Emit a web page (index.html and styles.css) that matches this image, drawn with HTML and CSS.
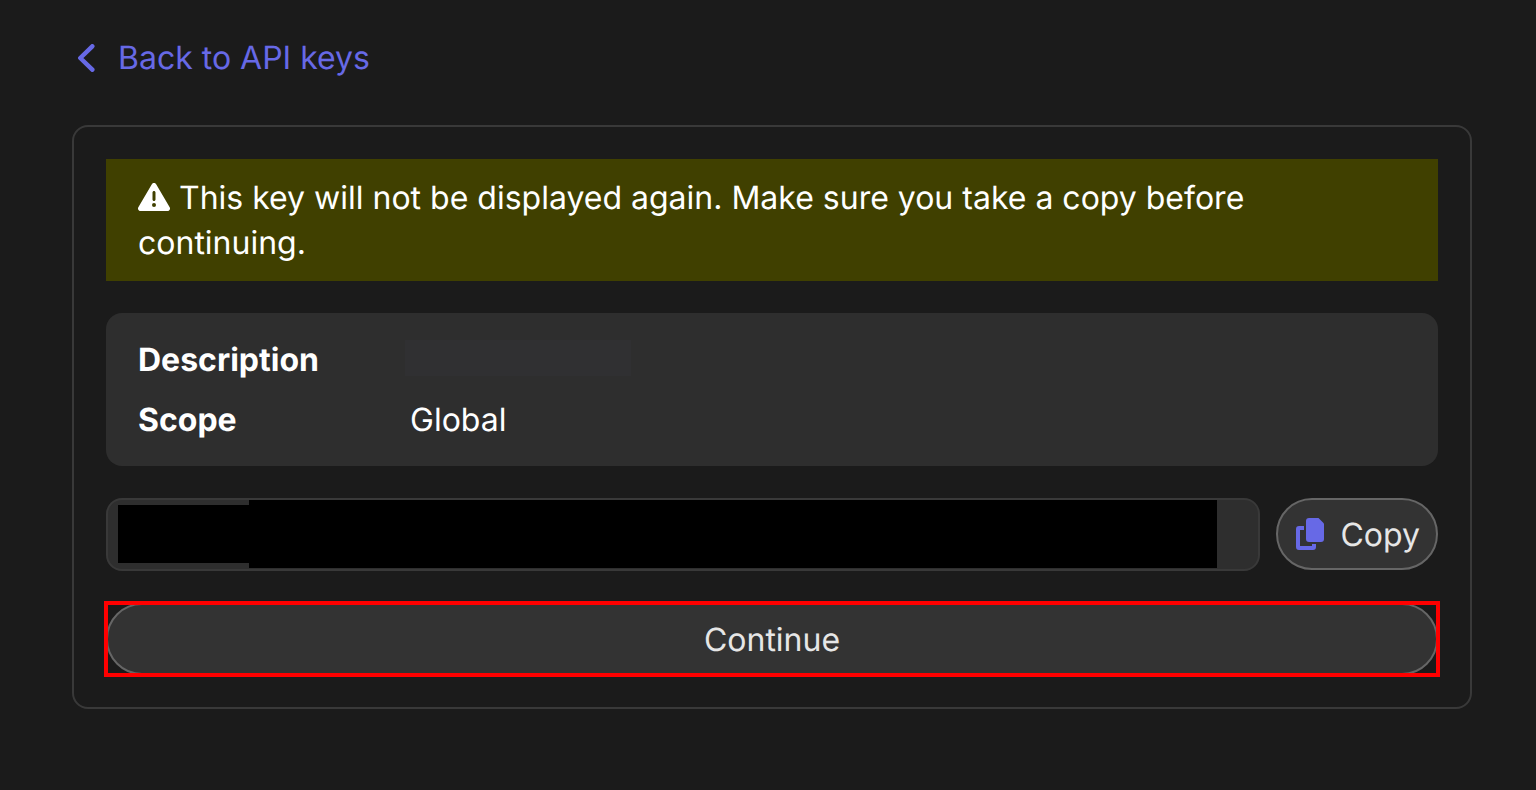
FILE: index.html
```
<!DOCTYPE html>
<html lang="en">
  <head>
    <meta charset="utf-8">
    <title>API key</title>
    <link rel="stylesheet" href="styles.css">
  </head>
  <body>
    <a href="#" class="back">
      <svg class="back-icon" viewBox="0 0 18 28" aria-hidden="true">
        <path d="M15.300 2.300 3.300 14 15.300 25.700"/>
      </svg>
      Back to API keys
    </a>

    <main class="card">
      <p class="warning">
        <svg class="warning-icon" viewBox="0 0 512 512" aria-hidden="true">
          <path d="M256 32c14.200 0 27.300 7.500 34.500 19.800l216 368c7.300 12.400 7.300 27.700.2 40.100S486.300 480 472 480H40c-14.300 0-27.600-7.700-34.700-20.100s-7-27.800.2-40.100l216-368C228.700 39.500 241.800 32 256 32zm0 128c-13.300 0-24 10.700-24 24v112c0 13.300 10.700 24 24 24s24-10.700 24-24V184c0-13.300-10.700-24-24-24zm32 224a32 32 0 1 0-64 0 32 32 0 1 0 64 0z"/>
        </svg>
        This key will not be displayed again. Make sure you take a copy before continuing.
      </p>

      <dl class="details">
        <dt>Description</dt>
        <dd><span class="hidden-text"></span></dd>
        <dt>Scope</dt>
        <dd>Global</dd>
      </dl>

      <div class="key-row">
        <div class="key-box">
          <input type="text" class="key" aria-label="API key" readonly>
          <span class="cover cover-start"></span>
          <span class="cover cover-rest"></span>
        </div>
        <button type="button" class="button copy">
          <svg class="copy-icon" viewBox="0 0 28 32" aria-hidden="true">
            <path d="M13 0h9.500L28 5.500V21a3 3 0 0 1-3 3H13a3 3 0 0 1-3-3V3a3 3 0 0 1 3-3z"/>
            <path d="M3 8h5v4H4v16h12v-2h4v3a3 3 0 0 1-3 3H3a3 3 0 0 1-3-3V11a3 3 0 0 1 3-3z"/>
          </svg>
          Copy
        </button>
      </div>

      <div class="highlight">
        <button type="button" class="button continue">Continue</button>
      </div>
    </main>
  </body>
</html>
```
FILE: styles.css
```
*{
  box-sizing: border-box;
}

body{
  margin: 0;
  padding: 35px 64px 35px 72px;
  color: white;
  background-color: #1b1b1b;
  font-family: Inter, "Liberation Sans", sans-serif;
  font-size: 32px;
  line-height: 45px;
  font-optical-sizing: none;
  text-rendering: geometricPrecision;
}

.back{
  display: flex;
  align-items: center;
  gap: 23px;
  width: fit-content;
  padding-left: 5px;
  color: #6769e6;
  text-decoration: none;
}

.back-icon{
  width: 18px;
  height: 28px;
  fill: none;
  stroke: #6769e6;
  stroke-width: 4.5;
  stroke-linecap: round;
  stroke-linejoin: round;
}

.card{
  display: flex;
  flex-direction: column;
  gap: 32px;
  margin-top: 45px;
  padding: 32px;
  border: 2px solid #393939;
  border-radius: 16px;
}

.warning{
  margin: 0;
  padding: 16px 32px;
  background-color: #404000;
}

.warning-icon{
  width: 32px;
  height: 32px;
  vertical-align: -4px;
  fill: white;
}

.details{
  display: grid;
  grid-template-columns: 272px 1fr;
  row-gap: 15px;
  margin: 0;
  padding: 24px 32px;
  border-radius: 16px;
  background-color: #2e2e2e;
}

.details dt{
  font-weight: bold;
}

.details dd{
  display: flex;
  align-items: center;
  margin: 0;
}

.hidden-text{
  width: 226px;
  height: 36px;
  margin: 0 0 4px -5px;
  background-color: #303032;
}

.key-row{
  display: flex;
  align-items: flex-start;
  gap: 16px;
}

.key-box{
  position: relative;
  flex: 1;
  height: 73px;
}

.key{
  display: block;
  width: 100%;
  height: 100%;
  padding: 0 16px;
  border: 2px solid #393939;
  border-radius: 16px;
  color: white;
  background-color: #2e2e2e;
  font: inherit;
}

/* black bars over the key */
.cover{
  position: absolute;
  background-color: black;
}

.cover-start{
  top: 7px;
  bottom: 8px;
  left: 12px;
  width: 132px;
}

.cover-rest{
  top: 2px;
  bottom: 3px;
  left: 143px;
  right: 43px;
}

.button{
  height: 72px;
  border: 2px solid #666666;
  border-radius: 36px;
  color: #e6e6e6;
  background-color: #333333;
  font: inherit;
  text-rendering: inherit;
  cursor: pointer;
}

.copy{
  display: flex;
  align-items: center;
  gap: 16px;
  padding: 0 16px 0 18px;
}

.copy-icon{
  width: 28px;
  height: 32px;
  fill: #6769e6;
}

.highlight{
  position: relative;
}

.highlight::after{
  content: "";
  position: absolute;
  inset: -2px;
  border: 4px solid red;
  pointer-events: none;
}

.continue{
  display: block;
  width: 100%;
}
```
